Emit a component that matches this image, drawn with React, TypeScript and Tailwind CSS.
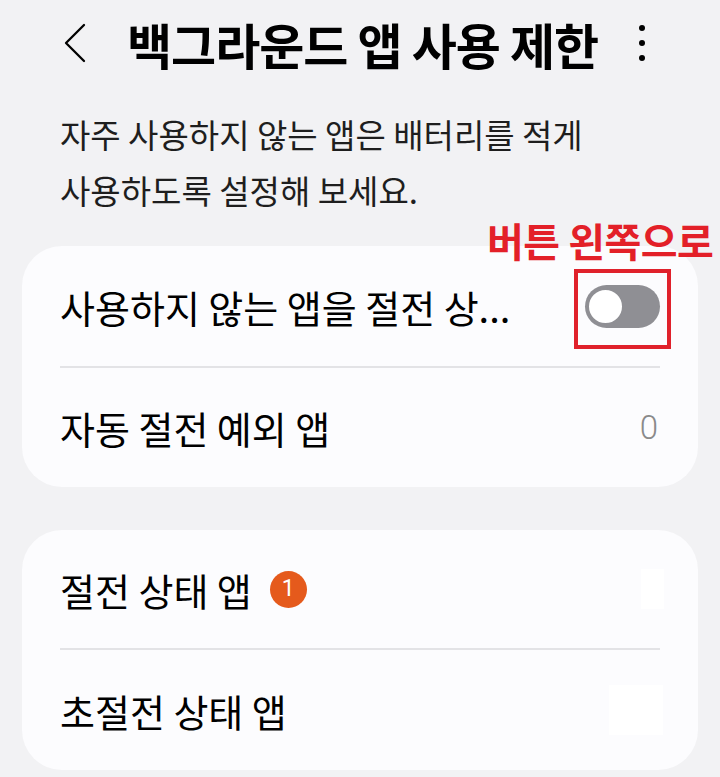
const font = { fontFamily: '"Noto Sans CJK KR", "Noto Sans", sans-serif' };

const Divider = () => <div className="mx-[38px] h-[2px] bg-[#e3e3e6]" />;

const Toggle = () => (
  <div className="flex h-[43px] w-[75px] items-center rounded-full bg-[#8f8f94] px-[2px]">
    <div className="h-[37px] w-[37px] rounded-full border-[2px] border-[#8f8f94] bg-white" />
  </div>
);

export default function App() {
  return (
    <div className="relative h-[777px] w-[720px] overflow-hidden bg-[#f2f2f4] text-black" style={font}>
      {/* Header */}
      <div className="flex h-[86px] items-center pl-[63px] pr-[75px]">
        <svg width="24" height="42" viewBox="0 0 24 42" fill="none" stroke="black" strokeWidth="2.3" strokeLinecap="round" strokeLinejoin="round">
          <polyline points="21,3 3,21 21,39" />
        </svg>
        <h1 className="ml-[40px] flex-1 text-[49px] font-bold leading-none tracking-[-1px]">백그라운드 앱 사용 제한</h1>
        <div className="flex flex-col items-center gap-[9px]">
          <span className="h-[6px] w-[6px] rounded-full bg-black" />
          <span className="h-[6px] w-[6px] rounded-full bg-black" />
          <span className="h-[6px] w-[6px] rounded-full bg-black" />
        </div>
      </div>

      {/* Description */}
      <p className="mt-[20px] px-[60px] text-[33px] leading-[56px] text-[#1e1e1e]">
        자주 사용하지 않는 앱은 배터리를 적게
        <br />
        사용하도록 설정해 보세요.
      </p>

      {/* Card 1 */}
      <div className="mx-[22px] mt-[28px] rounded-[40px] bg-[#fcfcfe]">
        <div className="flex h-[120px] items-center justify-between pl-[38px] pr-[38px]">
          <span className="text-[38px]">사용하지 않는 앱을 절전 상...</span>
          <Toggle />
        </div>
        <Divider />
        <div className="flex h-[119px] items-center justify-between pl-[38px] pr-[40px]">
          <span className="text-[38px]">자동 절전 예외 앱</span>
          <span className="text-[33px] font-light text-[#8a8a8a]" style={{ fontFamily: '"Roboto", sans-serif' }}>0</span>
        </div>
      </div>

      {/* Card 2 */}
      <div className="mx-[22px] mt-[43px] rounded-[40px] bg-[#fcfcfe]">
        <div className="flex h-[118px] items-center justify-between pl-[38px] pr-[34px]">
          <div className="flex items-center gap-[18px]">
            <span className="text-[38px]">절전 상태 앱</span>
            <span className="flex h-[37px] w-[37px] items-center justify-center rounded-full bg-[#e55a1c] text-[23px] text-white" style={{ fontFamily: '"Roboto", sans-serif' }}>1</span>
          </div>
          <div className="h-[40px] w-[23px] bg-white" />
        </div>
        <Divider />
        <div className="flex h-[120px] items-center justify-between pl-[38px] pr-[35px]">
          <span className="text-[38px]">초절전 상태 앱</span>
          <div className="h-[50px] w-[54px] bg-white" />
        </div>
      </div>

      {/* Annotation */}
      <div className="absolute left-[487px] top-[212px] whitespace-nowrap text-[40px] font-bold leading-[56px] tracking-[-0.5px] text-[#e32028]">
        버튼 왼쪽으로
      </div>
      <div className="absolute left-[574px] top-[269px] h-[80px] w-[97px] border-[4px] border-[#e0212b]" />
    </div>
  );
}
